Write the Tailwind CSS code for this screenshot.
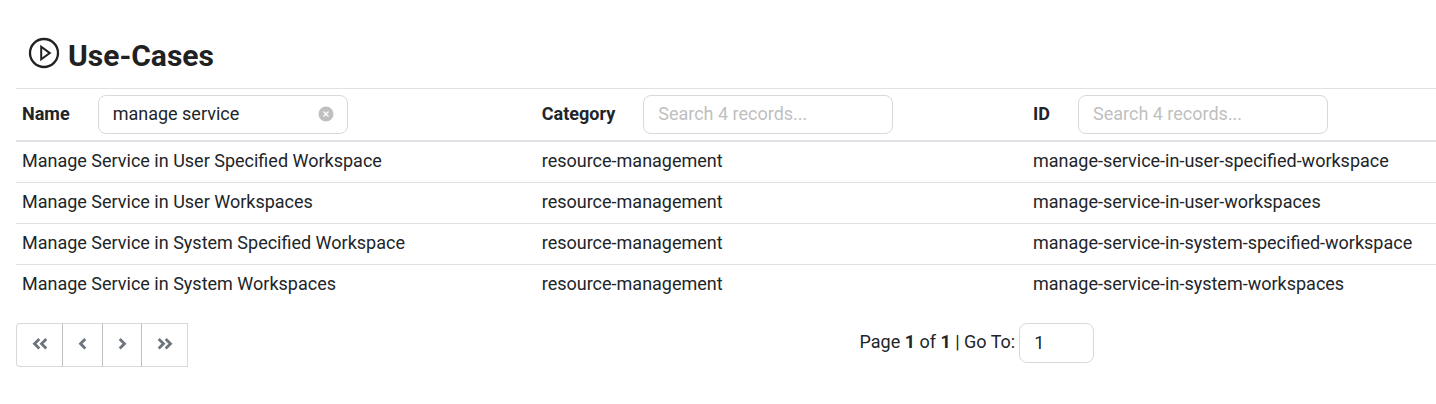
<!DOCTYPE html>
<html lang="en">
<head>
    <meta charset="UTF-8">
    <meta name="viewport" content="width=device-width, initial-scale=1.0">
    <title>Use-Cases</title>
    <script src="https://cdn.jsdelivr.net/npm/@tailwindcss/browser@4"></script>
</head>
<body class="bg-white text-[#212529] font-[Roboto,sans-serif] text-lg leading-7">
    <main class="pl-4 pt-8">
        <header class="flex items-center gap-2 h-14 pl-3 pb-2">
            <svg class="w-8 h-8 -mt-1.5" viewBox="0 0 32 32" fill="none" stroke="#212121" aria-hidden="true">
                <circle cx="16" cy="16" r="14" stroke-width="2.3"/>
                <path d="M13.2 9.8v12.6l8.6-6.3z" stroke-width="2"/>
            </svg>
            <h1 class="text-3xl font-bold text-[#212121]">Use-Cases</h1>
        </header>

        <table class="w-full table-fixed border-collapse text-left">
            <colgroup>
                <col class="w-[36.6%]">
                <col class="w-[34.6%]">
                <col>
            </colgroup>
            <thead>
                <tr class="border-t border-b-2 border-[#dee2e6]">
                    <th class="p-1.5 font-bold">
                        <div class="flex items-center gap-7">
                            <label for="search-name" class="pb-0.5">Name</label>
                            <div class="relative w-[250px]">
                                <input id="search-name" type="text" value="manage service" class="block w-full h-[39px] pl-3.5 pr-10 pb-0.5 border border-[#d9d9d9] rounded-lg font-normal">
                                <button type="button" aria-label="Clear" class="absolute right-3.5 top-[11px] block">
                                    <svg class="w-4 h-4" viewBox="0 0 16 16">
                                        <circle cx="8" cy="8" r="7.5" fill="#bfbfbf"/>
                                        <path d="M5.5 5.5l5 5M10.5 5.5l-5 5" stroke="#fff" stroke-width="1.3"/>
                                    </svg>
                                </button>
                            </div>
                        </div>
                    </th>
                    <th class="p-1.5 font-bold">
                        <div class="flex items-center gap-7">
                            <label for="search-category" class="pb-0.5">Category</label>
                            <input id="search-category" type="text" placeholder="Search 4 records..." class="block w-[250px] h-[39px] px-3.5 pb-0.5 border border-[#d9d9d9] rounded-lg font-normal placeholder:text-[#bfbfbf]">
                        </div>
                    </th>
                    <th class="p-1.5 font-bold">
                        <div class="flex items-center gap-7">
                            <label for="search-id" class="pb-0.5">ID</label>
                            <input id="search-id" type="text" placeholder="Search 4 records..." class="block w-[250px] h-[39px] px-3.5 pb-0.5 border border-[#d9d9d9] rounded-lg font-normal placeholder:text-[#bfbfbf]">
                        </div>
                    </th>
                </tr>
            </thead>
            <tbody class="divide-y divide-[#dee2e6]">
                <tr>
                    <td class="px-1.5 pt-[5px] pb-[7px]">Manage Service in User Specified Workspace</td>
                    <td class="px-1.5 pt-[5px] pb-[7px]">resource-management</td>
                    <td class="px-1.5 pt-[5px] pb-[7px]">manage-service-in-user-specified-workspace</td>
                </tr>
                <tr>
                    <td class="px-1.5 pt-[5px] pb-[7px]">Manage Service in User Workspaces</td>
                    <td class="px-1.5 pt-[5px] pb-[7px]">resource-management</td>
                    <td class="px-1.5 pt-[5px] pb-[7px]">manage-service-in-user-workspaces</td>
                </tr>
                <tr>
                    <td class="px-1.5 pt-[5px] pb-[7px]">Manage Service in System Specified Workspace</td>
                    <td class="px-1.5 pt-[5px] pb-[7px]">resource-management</td>
                    <td class="px-1.5 pt-[5px] pb-[7px]">manage-service-in-system-specified-workspace</td>
                </tr>
                <tr>
                    <td class="px-1.5 pt-[5px] pb-[7px]">Manage Service in System Workspaces</td>
                    <td class="px-1.5 pt-[5px] pb-[7px]">resource-management</td>
                    <td class="px-1.5 pt-[5px] pb-[7px]">manage-service-in-system-workspaces</td>
                </tr>
            </tbody>
        </table>

        <div class="grid grid-cols-[59.4%_1fr] items-start pt-[18px]">
            <nav class="flex h-11 text-[#6c757d]" aria-label="Pagination">
                <button type="button" aria-label="First page" class="flex items-center justify-center w-[47px] pb-0.5 border border-[#d9d9d9] border-r-[#bfbfbf] rounded-l-sm">
                    <svg class="w-4 h-4" viewBox="0 0 16 16" fill="none" stroke="currentColor" stroke-width="2.8"><path d="M7.300 3L2.500 7.800l4.800 4.800M14.300 3L9.500 7.800l4.800 4.800"/></svg>
                </button>
                <button type="button" aria-label="Previous page" class="flex items-center justify-center w-10 pb-0.5 border-y border-r border-[#d9d9d9] border-r-[#bfbfbf]">
                    <svg class="w-4 h-4" viewBox="0 0 16 16" fill="none" stroke="currentColor" stroke-width="2.8"><path d="M10.300 3L5.500 7.800l4.800 4.800"/></svg>
                </button>
                <button type="button" aria-label="Next page" class="flex items-center justify-center w-[39px] pb-0.5 border-y border-r border-[#d9d9d9] border-r-[#bfbfbf]">
                    <svg class="w-4 h-4" viewBox="0 0 16 16" fill="none" stroke="currentColor" stroke-width="2.8"><path d="M5.700 3l4.800 4.800-4.800 4.800"/></svg>
                </button>
                <button type="button" aria-label="Last page" class="flex items-center justify-center w-[46px] pb-0.5 border-y border-r border-[#d9d9d9]">
                    <svg class="w-4 h-4" viewBox="0 0 16 16" fill="none" stroke="currentColor" stroke-width="2.8"><path d="M1.700 3l4.800 4.800-4.800 4.800M8.700 3l4.800 4.800-4.800 4.800"/></svg>
                </button>
            </nav>
            <div class="flex items-center gap-1">
                <label for="go-to" class="pb-0.5">Page <strong>1</strong> of <strong>1</strong> | Go To:</label>
                <input id="go-to" type="text" inputmode="numeric" value="1" class="w-[75px] h-10 px-3.5 pb-0.5 border border-[#d9d9d9] rounded-lg">
            </div>
        </div>
    </main>
</body>
</html>
